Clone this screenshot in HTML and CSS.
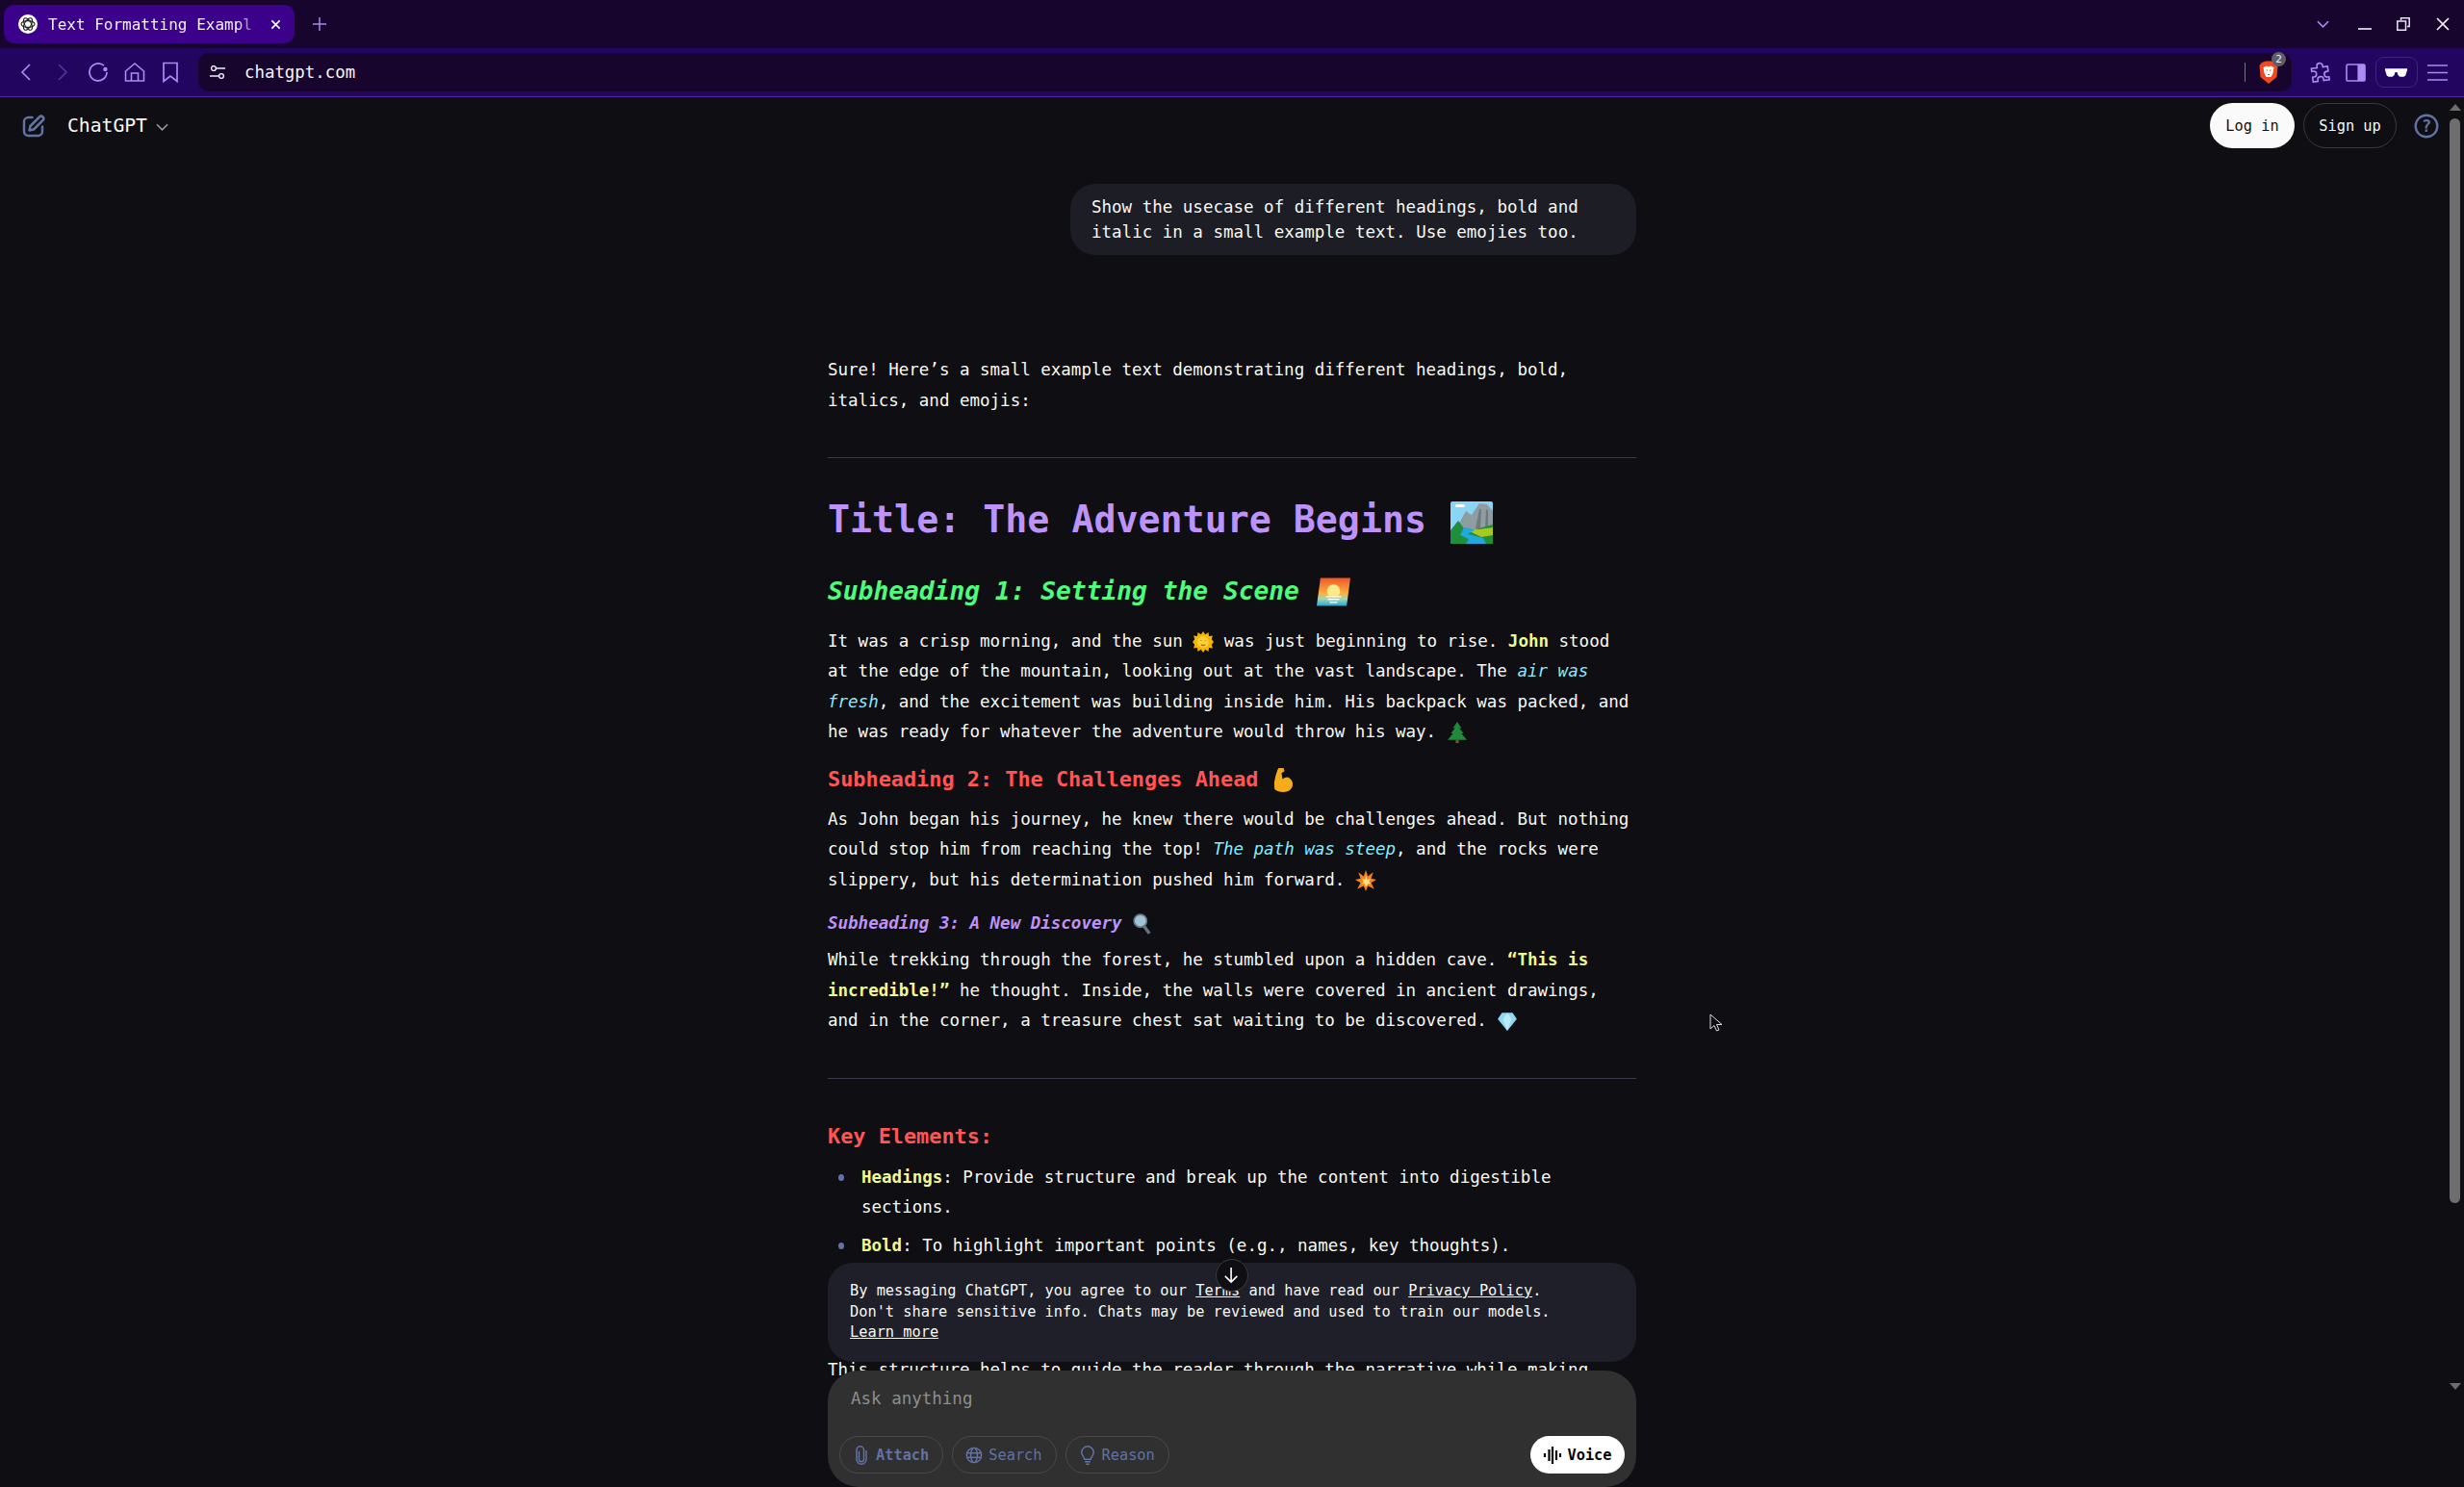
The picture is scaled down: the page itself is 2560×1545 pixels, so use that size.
FILE: index.html
```html
<!DOCTYPE html>
<html lang="en">
<head>
    <meta charset="UTF-8">
    <title>Text Formatting Example</title>
    <link rel="stylesheet" href="styles.css">
</head>
<body>
    <div class="tabbar">
        <div class="tab">
            <svg class="favicon" viewBox="0 0 20 20"><circle cx="10" cy="10" r="10" fill="#fff"/><g fill="none" stroke="#222" stroke-width="1.1"><ellipse cx="10" cy="10" rx="7" ry="3.4"/><ellipse cx="10" cy="10" rx="7" ry="3.4" transform="rotate(60 10 10)"/><ellipse cx="10" cy="10" rx="7" ry="3.4" transform="rotate(120 10 10)"/></g></svg>
            <span class="tab-title">Text Formatting Exampl</span>
            <svg class="tab-close" viewBox="0 0 12 12"><path d="M1.5 1.5l9 9M10.5 1.5l-9 9" stroke="#fff" stroke-width="1.7"/></svg>
        </div>
        <svg class="new-tab" viewBox="0 0 14 14"><path d="M7 0v14M0 7h14" stroke="#a48be8" stroke-width="1.5"/></svg>
        <div class="win-controls">
            <svg class="tab-list" viewBox="0 0 14 9"><path d="M1 1l6 6 6-6" fill="none" stroke="#a98cf5" stroke-width="1.7"/></svg>
            <svg class="win-min" viewBox="0 0 14 14"><path d="M0 12h14" stroke="#e8e4f2" stroke-width="1.7"/></svg>
            <svg class="win-max" viewBox="0 0 14 14"><path d="M4.5 3V.8h8.7v8.7H11M.8 4h8.7v9.2H.8z" fill="none" stroke="#e8e4f2" stroke-width="1.5"/></svg>
            <svg class="win-close" viewBox="0 0 14 14"><path d="M1 1l12 12M13 1L1 13" stroke="#f0edf6" stroke-width="1.7"/></svg>
        </div>
    </div>

    <div class="toolbar">
        <svg class="tool-icon" viewBox="0 0 22 22"><path d="M15 3l-8 8 8 8" fill="none" stroke="#a98cf5" stroke-width="1.7"/></svg>
        <svg class="tool-icon dim" viewBox="0 0 22 22"><path d="M7 3l8 8-8 8" fill="none" stroke="#53349f" stroke-width="1.7"/></svg>
        <svg class="tool-icon" viewBox="0 0 22 22"><path d="M17 4.2A9 9 0 1 0 20 11" fill="none" stroke="#a98cf5" stroke-width="1.7"/><circle cx="18.4" cy="8" r="2.2" fill="#a98cf5"/></svg>
        <svg class="tool-icon" viewBox="0 0 22 22"><path d="M1.5 10L11 2l9.5 8v10h-19zM7.5 20v-8h7v8" fill="none" stroke="#a98cf5" stroke-width="1.6"/></svg>
        <svg class="tool-icon" viewBox="0 0 22 22"><path d="M4 1.5h14v19l-7-5.5-7 5.5z" fill="none" stroke="#a98cf5" stroke-width="1.7"/></svg>
        <div class="address">
            <svg class="tune" viewBox="0 0 16 14"><g fill="none" stroke="#f2eefa" stroke-width="1.4"><circle cx="4" cy="3" r="2.4"/><circle cx="12" cy="11" r="2.4"/><path d="M7 3h9M0 11h9"/></g></svg>
            <span class="url">chatgpt.com</span>
            <span class="addr-sep"></span>
            <span class="shield">
                <svg viewBox="0 0 20 24"><path d="M3 2l4-1.5h6L17 2l2.500 3-1 12L10 24 1.500 17l-1-12z" fill="#f0491f"/><path d="M4.500 7l3.500-1.500 2 1 2-1L15.500 7l-1 6-2 4h-5l-2-4z" fill="#fff"/><path d="M7.500 10h1.500M11 10h1.500M9 14.500h2" stroke="#f0491f" stroke-width="1.200"/></svg>
                <span class="badge">2</span>
            </span>
        </div>
        <svg class="ext-icon" viewBox="0 0 22 22"><path d="M8 4.500a3 3 0 0 1 6 0V6h5v5h-1.500a3 3 0 0 0 0 6H19v3h-6v-1.500a3 3 0 0 0-6 0V20H2v-5h1.500a3 3 0 0 0 0-6H2V6h6z" fill="none" stroke="#a98cf5" stroke-width="1.600" transform="rotate(-8 11 11)"/></svg>
        <svg class="side-icon" viewBox="0 0 22 20"><rect x="1" y="1" width="20" height="18" rx="1.500" fill="none" stroke="#a98cf5" stroke-width="1.700"/><rect x="13" y="1" width="8" height="18" fill="#a98cf5"/></svg>
        <div class="glasses">
            <svg viewBox="0 0 24 11"><path d="M0 1h24v2l-2 6-2 1h-4l-2-2-1-3h-2l-1 3-2 2H4l-2-1-2-6z" fill="#fff"/></svg>
        </div>
        <svg class="menu-icon" viewBox="0 0 21 17"><path d="M0 1h21M0 8.500h21M0 16h21" stroke="#a98cf5" stroke-width="1.700"/></svg>
    </div>

    <main class="page">
        <header class="chat-header">
            <svg class="compose" viewBox="0 0 24 24"><path d="M10.500 3H6.500a4.500 4.500 0 0 0-4.500 4.500v10a4.500 4.500 0 0 0 4.500 4.500h10a4.500 4.500 0 0 0 4.500-4.500v-5" fill="none" stroke="#6272a4" stroke-width="2.500" stroke-linecap="round"/><path d="M7.500 16.500l1-4.500L18 2.500a2.300 2.300 0 0 1 3.500 3.500L12 15.500z" fill="none" stroke="#6272a4" stroke-width="2.500" stroke-linejoin="round"/></svg>
            <span class="brand">ChatGPT</span>
            <svg class="brand-caret" viewBox="0 0 14 9"><path d="M1 1l6 6 6-6" fill="none" stroke="#9a9a9a" stroke-width="1.700"/></svg>
            <span class="header-gap"></span>
            <button class="btn-login">Log in</button>
            <button class="btn-signup">Sign up</button>
            <svg class="help" viewBox="0 0 26 26"><circle cx="13" cy="13" r="11.300" fill="none" stroke="#6272a4" stroke-width="2.400"/><text x="13" y="19" text-anchor="middle" class="help-mark">?</text></svg>
        </header>

        <div class="thread">
            <div class="bubble">Show the usecase of different headings, bold and italic in a small example text. Use emojies too.</div>

            <article class="answer">
                <p class="intro">Sure! Here’s a small example text demonstrating different headings, bold, italics, and emojis:</p>
                <hr class="rule-one">
                <h1>Title: The Adventure Begins
                    <svg class="emoji emoji-park" viewBox="0 0 44 44"><rect width="44" height="44" rx="2" fill="#8ad4f6"/><path d="M6 28L16 10l6 4 8-12 8 1 6 7v20z" fill="#8f9ca0"/><path d="M26 28l4-20 2 0-1 20zM36 28l1-20 2 1 0 19z" fill="#6d7a7e"/><path d="M0 30l8-10 6 8 8 2 22-6v20H0z" fill="#1f8f3e"/><path d="M14 28l16 1 14-2v8l-12 2-6-3z" fill="#a8c91f"/><path d="M14 27l12 2-8 5 16 4 3 6H16l3-5-9-4z" fill="#22a7e0"/><rect x="5" y="3" width="10" height="3" rx="1.500" fill="#fff"/></svg>
                </h1>
                <h2 class="sub-one">Subheading 1: Setting the Scene
                    <svg class="emoji emoji-sunrise" viewBox="0 0 36 30"><defs><linearGradient id="sky" x1="0" y1="0" x2="0" y2="1"><stop offset="0" stop-color="#f0562a"/><stop offset=".55" stop-color="#fbb040"/><stop offset=".75" stop-color="#9fd9b5"/><stop offset="1" stop-color="#27a6d8"/></linearGradient></defs><path d="M4 0h32l-4 30H0z" fill="url(#sky)"/><circle cx="18" cy="14" r="7" fill="#ffe98a"/><path d="M10 20h16M12 23h12M14 26h8" stroke="#fff" stroke-width="1.500"/></svg>
                </h2>
                <p>It was a crisp morning, and the sun
                    <svg class="emoji emoji-sm" viewBox="0 0 20 20"><path d="M10 0l2 3 3-2 .5 3.500L19 4l-1 3.500 2 2.500-2 2.500 1 3.500-3.500-.5L15 19l-3-2-2 3-2-3-3 2-.5-3.500L1 16l1-3.500L0 10l2-2.500L1 4l3.500.5L5 1l3 2z" fill="#f7b500"/><circle cx="10" cy="10" r="5.500" fill="#fcd03a"/><path d="M8 8.500v.5M12 8.500v.5M8 12.500q2 1.500 4 0" stroke="#a86b00" stroke-width="1" fill="none"/></svg>
                    was just beginning to rise. <strong>John</strong> stood at the edge of the mountain, looking out at the vast landscape. The <em>air was fresh</em>, and the excitement was building inside him. His backpack was packed, and he was ready for whatever the adventure would throw his way.
                    <svg class="emoji emoji-sm" viewBox="0 0 20 20"><path d="M10 0l4 6h-2l4 5h-2l5 6H1l5-6H4l4-5H6z" fill="#1f8a3c"/><rect x="8.500" y="17" width="3" height="3" fill="#7a5230"/></svg>
                </p>
                <h3 class="sub-two">Subheading 2: The Challenges Ahead
                    <svg class="emoji emoji-arm" viewBox="0 0 22 26"><path d="M7 1h5l1 3-3 2 1 6q4-3 7-1 4 3 3 8-2 6-9 6-7 0-9-3-1-7 1-13L6 3z" fill="#f5ac1b"/></svg>
                </h3>
                <p>As John began his journey, he knew there would be challenges ahead. But nothing could stop him from reaching the top! <em>The path was steep</em>, and the rocks were slippery, but his determination pushed him forward.
                    <svg class="emoji emoji-sm" viewBox="0 0 20 20"><path d="M10 0l2 6 5-4-2 6 5 1-5 3 3 6-6-3-2 5-2-5-6 3 3-6-5-3 5-1-2-6 5 4z" fill="#f5821f"/><path d="M10 5l1.500 4 3-1-1.500 3 2 2-3 0-2 3-1-3-3 0 2-2-1.500-3 3 1z" fill="#ffe27a"/></svg>
                </p>
                <h4 class="sub-three">Subheading 3: A New Discovery
                    <svg class="emoji emoji-sm" viewBox="0 0 20 20"><circle cx="8" cy="7" r="6" fill="#9fc4d6" stroke="#66757f" stroke-width="1.500"/><path d="M11.500 12l5 7" stroke="#66757f" stroke-width="3"/></svg>
                </h4>
                <p class="after-three">While trekking through the forest, he stumbled upon a hidden cave. <strong>“This is incredible!”</strong> he thought. Inside, the walls were covered in ancient drawings, and in the corner, a treasure chest sat waiting to be discovered.
                    <svg class="emoji emoji-sm" viewBox="0 0 20 20"><path d="M5 2h10l4 6-9 11L1 8z" fill="#8fd8f5"/><path d="M1 8h18M6 8l4 11 4-11-4-6z" fill="#bdeafb"/></svg>
                </p>
                <hr class="rule-two">
                <h3 class="key">Key Elements:</h3>
                <ul>
                    <li><strong>Headings</strong>: Provide structure and break up the content into digestible sections.</li>
                    <li><strong>Bold</strong>: To highlight important points (e.g., names, key thoughts).</li>
                </ul>
                <p class="closing">This structure helps to guide the reader through the narrative while making</p>
            </article>
        </div>

        <div class="dock">
            <button class="scroll-down"><svg viewBox="0 0 18 20"><path d="M9 1v17M2 11l7 7 7-7" fill="none" stroke="#fff" stroke-width="1.800"/></svg></button>
            <div class="notice">By messaging ChatGPT, you agree to our <a>Terms</a> and have read our <a>Privacy Policy</a>.<br>Don't share sensitive info. Chats may be reviewed and used to train our models.<br><a>Learn more</a></div>
            <div class="composer">
                <div class="placeholder">Ask anything</div>
                <div class="composer-row">
                    <button class="pill bold">
                        <svg viewBox="0 0 16 24"><path d="M5 7v10a3 3 0 0 0 6 0V5.500a4.500 4.500 0 0 0-9 0V17a6 6 0 0 0 12 0V6" fill="none" stroke="#6272a4" stroke-width="1.800"/></svg>Attach
                    </button>
                    <button class="pill">
                        <svg viewBox="0 0 20 20"><g fill="none" stroke="#6272a4" stroke-width="1.600"><circle cx="10" cy="10" r="8.500"/><ellipse cx="10" cy="10" rx="3.800" ry="8.500"/><path d="M1.500 7.500h17M1.500 12.500h17"/></g></svg>Search
                    </button>
                    <button class="pill">
                        <svg viewBox="0 0 18 24"><g fill="none" stroke="#6272a4" stroke-width="1.800"><path d="M5 17c0-3-3.500-4-3.500-8.500a7.500 7.500 0 0 1 15 0C16.500 13 13 14 13 17z"/><path d="M5.500 20h7M7 23h4"/></g></svg>Reason
                    </button>
                    <span class="header-gap"></span>
                    <button class="voice">
                        <svg viewBox="0 0 20 18"><path d="M2 7v4M6.500 3v12M10 0v18M14 4v10M18 7v4" stroke="#000" stroke-width="2.200"/></svg>Voice
                    </button>
                </div>
            </div>
        </div>

        <div class="scrollbar">
            <span class="arrow-up"></span>
            <span class="thumb"></span>
            <span class="arrow-down"></span>
        </div>

        <svg class="cursor" viewBox="0 0 14 20"><path d="M1 1v15l4-3.500 2.500 5.500 2.500-1-2.500-5.500H13z" fill="#0d0d12" stroke="#ddd" stroke-width="1"/></svg>
    </main>
</body>
</html>
```

FILE: styles.css
```css
* {
    box-sizing: border-box;
}
html, body {
    margin: 0;
    height: 100%;
    overflow: hidden;
}
body {
    font-family: "DejaVu Sans Mono", monospace;
    background-color: #0e0e13;
    color: #f8f8f2;
    display: flex;
    flex-direction: column;
}
button {
    font-family: inherit;
    cursor: pointer;
}

/* browser chrome */
.tabbar {
    height: 50px;
    flex: none;
    background-color: #17052e;
    display: flex;
    align-items: center;
    padding: 0 15px 0 4px;
}
.tab {
    width: 302px;
    height: 40px;
    background-color: #3b018a;
    border-radius: 11px;
    display: flex;
    align-items: center;
    padding: 0 14px 0 15px;
    color: #f3eefc;
    font-size: 16px;
}
.favicon {
    width: 20px;
    height: 20px;
    margin-right: 11px;
    flex: none;
}
.tab-title {
    flex: 1;
    overflow: hidden;
    white-space: nowrap;
    -webkit-mask-image: linear-gradient(to right, #000 88%, transparent);
}
.tab-close {
    width: 11px;
    height: 11px;
    margin-left: 8px;
    flex: none;
}
.new-tab {
    width: 14px;
    height: 14px;
    margin-left: 19px;
}
.win-controls {
    margin-left: auto;
    display: flex;
    align-items: center;
}
.tab-list {
    width: 13px;
    height: 9px;
    margin-right: 30px;
}
.win-min, .win-max, .win-close {
    width: 14px;
    height: 14px;
}
.win-min {
    margin-right: 26px;
}
.win-max {
    margin-right: 27px;
}
.toolbar {
    height: 51px;
    flex: none;
    background-color: #22055e;
    border-bottom: 1px solid #4a2c9e;
    display: flex;
    align-items: center;
    padding: 0 15px 0 16px;
}
.tool-icon {
    width: 22px;
    height: 22px;
    margin-right: 15.6px;
    flex: none;
}
.address {
    width: 2175px;
    height: 40px;
    margin-left: 2px;
    background-color: #17052e;
    border-radius: 11px;
    display: flex;
    align-items: center;
    padding: 0 14px 0 12px;
}
.tune {
    width: 16px;
    height: 14px;
    margin: 0 20px 0 0;
}
.url {
    font-size: 17.4px;
    color: #f7f4fd;
}
.addr-sep {
    width: 1px;
    height: 20px;
    background-color: #77708a;
    margin-left: auto;
    margin-right: 14px;
}
.shield {
    position: relative;
    width: 20px;
    height: 24px;
}
.shield svg {
    width: 20px;
    height: 24px;
    display: block;
}
.badge {
    position: absolute;
    left: 13px;
    top: -9px;
    width: 15px;
    height: 15px;
    border-radius: 50%;
    background-color: #5e5e68;
    color: #eee;
    font-size: 11px;
    line-height: 15px;
    text-align: center;
}
.ext-icon {
    width: 22px;
    height: 22px;
    margin-left: 19px;
}
.side-icon {
    width: 21px;
    height: 19px;
    margin-left: 15px;
}
.glasses {
    width: 44px;
    height: 32px;
    margin-left: 10px;
    border: 1px solid #3f2384;
    border-radius: 9px;
    display: flex;
    align-items: center;
    justify-content: center;
}
.glasses svg {
    width: 23px;
    height: 11px;
}
.menu-icon {
    width: 21px;
    height: 17px;
    margin-left: 10px;
}

/* page */
.page {
    position: relative;
    flex: 1;
    overflow: hidden;
}
.chat-header {
    height: 59px;
    display: flex;
    align-items: center;
    padding: 0 26px 0 23px;
}
.compose {
    width: 24px;
    height: 24px;
    margin-right: 23px;
}
.brand {
    font-size: 19.7px;
    color: #f8f8f2;
}
.brand-caret {
    width: 13px;
    height: 9px;
    margin-left: 9px;
    margin-top: 3px;
}
.header-gap {
    flex: 1;
}
.btn-login, .btn-signup {
    height: 47px;
    border-radius: 24px;
    font-size: 15.3px;
}
.btn-login {
    width: 88px;
    border: none;
    background-color: #fafafa;
    color: #111;
}
.btn-signup {
    width: 97px;
    margin-left: 9px;
    background-color: transparent;
    border: 1px solid #3a3a3e;
    color: #f8f8f2;
}
.help {
    width: 26px;
    height: 26px;
    margin-left: 18px;
}
.help-mark {
    font-size: 17px;
    font-weight: bold;
    fill: #6272a4;
}
.thread {
    width: 840px;
    margin: 0 auto;
    padding-top: 31px;
    font-size: 17.5px;
}
.bubble {
    width: 588px;
    margin-left: auto;
    padding: 11px 22px 11px;
    background-color: #1c1d25;
    border-radius: 26px;
    line-height: 26px;
}
.answer {
    padding-top: 104px;
}
.answer p {
    margin: 0;
    line-height: 31.5px;
}
hr {
    border: none;
    border-top: 1px solid #3a3a4a;
    margin: 0;
}
.rule-one {
    margin-top: 43px;
}
h1 {
    margin: 41px 0 0;
    font-size: 38.28px;
    line-height: 46px;
    color: #bd93f9;
}
.sub-one {
    margin: 31px 0 19px;
    font-size: 26.25px;
    line-height: 36px;
    font-style: italic;
    color: #50fa7b;
}
.sub-two, .key {
    font-size: 21.875px;
    line-height: 30px;
    color: #ff5555;
}
.sub-two {
    margin: 18px 0 11px;
}
.sub-three {
    margin: 16px 0 10px;
    font-size: 17.5px;
    line-height: 26px;
    font-style: italic;
    color: #bd93f9;
}
.rule-two {
    margin-top: 43px;
}
.key {
    margin: 45px 0 12px;
}
strong {
    color: #f1fa8c;
}
em {
    color: #8be9fd;
}
ul {
    margin: 0;
    padding-left: 35px;
    line-height: 31.5px;
    list-style: none;
}
li {
    position: relative;
    margin-bottom: 8px;
}
li::before {
    content: "";
    position: absolute;
    left: -24px;
    top: 12px;
    width: 6px;
    height: 7px;
    border-radius: 50%;
    background-color: #6272a4;
}
.answer .closing {
    margin-top: 98px;
}
.emoji {
    vertical-align: middle;
}
.emoji-park {
    width: 44px;
    height: 44px;
    margin-left: 2px;
}
.emoji-sunrise {
    width: 35px;
    height: 30px;
    margin-left: 2px;
}
.emoji-sm {
    width: 22px;
    height: 22px;
}
.emoji-arm {
    width: 23px;
    height: 27px;
}

/* things floating over the thread */
.dock {
    position: absolute;
    left: 860px;
    bottom: 0;
    width: 840px;
}
.scroll-down {
    position: absolute;
    left: 403px;
    top: -4px;
    width: 34px;
    height: 34px;
    padding: 7px;
    border-radius: 50%;
    background-color: #0e0e13;
    border: 1px solid #3a3a3e;
    display: flex;
}
.notice {
    height: 103px;
    padding: 19px 23px 0;
    background-color: #1e1f29;
    border-radius: 26px;
    font-size: 15.31px;
    line-height: 21.5px;
}
.notice a {
    text-decoration: underline;
}
.composer {
    height: 121px;
    margin-top: 9px;
    padding: 0 12px;
    background-color: #303030;
    border-radius: 32px;
}
.placeholder {
    padding: 16px 12px 0;
    height: 68px;
    font-size: 17.5px;
    line-height: 26px;
    color: #8e8e8e;
}
.composer-row {
    display: flex;
    gap: 9px;
}
.pill {
    height: 39px;
    padding: 0 14px 0 13px;
    background-color: transparent;
    border: 1px solid #4a4a4a;
    border-radius: 20px;
    color: #6272a4;
    font-size: 15.31px;
    display: flex;
    align-items: center;
    gap: 6px;
}
.pill.bold {
    font-weight: bold;
}
.pill svg {
    width: 18px;
    height: 20px;
}
.voice {
    width: 98px;
    height: 39px;
    border: none;
    border-radius: 20px;
    background-color: #fff;
    color: #000;
    font-weight: bold;
    font-size: 15.31px;
    display: flex;
    align-items: center;
    justify-content: center;
    gap: 5px;
}
.voice svg {
    width: 20px;
    height: 18px;
}
.scrollbar {
    position: absolute;
    right: 3px;
    top: 7px;
    bottom: 101px;
    width: 13px;
    display: flex;
    flex-direction: column;
    align-items: center;
}
.arrow-up, .arrow-down {
    width: 0;
    height: 0;
    border-left: 6px solid transparent;
    border-right: 6px solid transparent;
}
.arrow-up {
    border-bottom: 7px solid #6e6e6e;
}
.arrow-down {
    margin-top: auto;
    border-top: 7px solid #6e6e6e;
}
.thumb {
    width: 11px;
    height: 1127px;
    margin-top: 8px;
    background-color: #6e6e6e;
    border-radius: 6px;
}
.cursor {
    position: absolute;
    left: 1776px;
    top: 952px;
    width: 14px;
    height: 20px;
}
```
